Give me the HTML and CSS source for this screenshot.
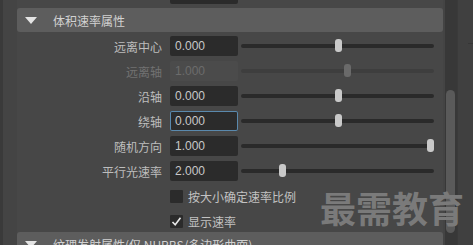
FILE: index.html
```html
<!DOCTYPE html>
<html lang="zh-CN">
<head>
  <meta charset="UTF-8" />
  <title>体积速率属性</title>
  <link rel="stylesheet" href="styles.css">
</head>
<body>
  <div class="app">
    <div class="edge"></div>
    <div class="gutter"></div>

    <div class="main">
      <!-- 上一组的尾部 -->
      <div class="prev"><div class="prev-field"></div></div>

      <section class="group">
        <div class="group-head"><span class="caret"></span>体积速率属性</div>
        <div class="group-body">
          <div class="row">
            <label>远离中心</label>
            <div class="field">0.000</div>
            <div class="slider"><span class="knob" style="left: 94px"></span></div>
          </div>
          <div class="row disabled">
            <label>远离轴</label>
            <div class="field">1.000</div>
            <div class="slider"><span class="knob" style="left: 103px"></span></div>
          </div>
          <div class="row">
            <label>沿轴</label>
            <div class="field">0.000</div>
            <div class="slider"><span class="knob" style="left: 94px"></span></div>
          </div>
          <div class="row">
            <label>绕轴</label>
            <div class="field focus">0.000</div>
            <div class="slider"><span class="knob" style="left: 94px"></span></div>
          </div>
          <div class="row">
            <label>随机方向</label>
            <div class="field">1.000</div>
            <div class="slider"><span class="knob" style="left: 186px"></span></div>
          </div>
          <div class="row">
            <label>平行光速率</label>
            <div class="field">2.000</div>
            <div class="slider"><span class="knob" style="left: 38px"></span></div>
          </div>
          <div class="row check-row">
            <label></label>
            <div class="check"><span class="box"></span>按大小确定速率比例</div>
          </div>
          <div class="row check-row">
            <label></label>
            <div class="check">
              <span class="box">
                <svg width="11" height="11" viewBox="0 0 11 11"><polyline points="1.5,6 4.2,8.8 9.5,1.8" fill="none" stroke="#e8e8e8" stroke-width="1.6"/></svg>
              </span>显示速率
            </div>
          </div>
        </div>
      </section>

      <section class="group">
        <div class="group-head"><span class="caret"></span>纹理发射属性(仅 NURBS/多边形曲面)</div>
      </section>
    </div>

    <div class="scroll"><div class="thumb"></div></div>
    <div class="side"><div class="side-mark"></div></div>

    <div class="watermark">最需教育</div>
  </div>
</body>
</html>
```

FILE: styles.css
```css
:root {
  --bg: #444444;
  --panel: #474747;
  --head: #5d5d5d;
  --field: #2b2b2b;
  --text: #bdbdbd;
  --muted: #727272;
}

html, body {
  margin: 0;
  padding: 0;
  height: 100%;
  overflow: hidden;
  background: var(--bg);
  font-family: "Noto Sans CJK SC", "Liberation Sans", sans-serif;
  font-size: 12px;
  color: var(--text);
}

.app {
  position: relative;
  display: flex;
  height: 245px;
  width: 473px;
}

.edge {
  width: 3px;
  background: #3a3a3a;
}

.gutter {
  width: 14px;
  background: var(--bg);
}

.main {
  width: 426px;
  background: var(--panel);
  margin-right: 2px;
}

.prev {
  height: 8px;
}

.prev-field {
  margin-left: 153px;
  width: 68px;
  height: 4px;
  background: var(--field);
  border-radius: 0 0 2px 2px;
}

.group-head {
  display: flex;
  align-items: center;
  height: 24px;
  background: var(--head);
  border-radius: 3px;
  color: #d2d2d2;
  font-size: 12px;
  white-space: nowrap;
  overflow: hidden;
}

.caret {
  width: 0;
  height: 0;
  margin: 0 16px 0 8px;
  border-left: 6px solid transparent;
  border-right: 6px solid transparent;
  border-top: 7px solid #e4e4e4;
}

.group-body {
  display: flex;
  flex-direction: column;
  gap: 5px;
  padding: 4px 0 1px;
}

.row {
  display: flex;
  align-items: center;
  height: 20px;
}

.row label {
  width: 145px;
  padding-right: 8px;
  text-align: right;
  white-space: nowrap;
}

.field {
  width: 63px;
  height: 20px;
  line-height: 20px;
  padding-left: 5px;
  background: var(--field);
  border-radius: 2px;
  font-family: "Liberation Sans", sans-serif;
  font-size: 12px;
  color: #c8c8c8;
  box-sizing: content-box;
}

.field.focus {
  box-shadow: inset 0 0 0 1px #5a89ad;
}

.slider {
  position: relative;
  margin-left: 3px;
  width: 193px;
  height: 4px;
  background: #2a2a2a;
  border-radius: 2px;
}

.knob {
  position: absolute;
  top: -5px;
  width: 7px;
  height: 13px;
  background: #c9c9c9;
  border-radius: 3px;
}

.disabled label { color: var(--muted); }
.disabled .field { background: #4b4b4b; color: #6c6c6c; }
.disabled .slider { background: #3e3e3e; }
.disabled .knob { background: #6a6a6a; }

.check {
  display: flex;
  align-items: center;
  gap: 5px;
  white-space: nowrap;
  color: #c2c2c2;
}

.box {
  display: flex;
  align-items: center;
  justify-content: center;
  width: 13px;
  height: 13px;
  background: var(--field);
  border-radius: 1px;
}

.scroll {
  width: 12px;
  background: #383838;
  padding-top: 90px;
  box-sizing: border-box;
}

.thumb {
  margin-left: 1px;
  width: 9px;
  height: 143px;
  background: #5a5a5a;
  border-radius: 5px;
}

.side {
  flex: 1;
  background: #404040;
  border-left: 1px solid #3a3a3a;
}

.side-mark {
  margin-left: 10px;
  height: 43px;
  border-bottom: 1px solid #363636;
}

.watermark {
  position: absolute;
  left: 320px;
  top: 181px;
  font-size: 36px;
  font-weight: bold;
  color: #7a7a7a;
  white-space: nowrap;
}
```
